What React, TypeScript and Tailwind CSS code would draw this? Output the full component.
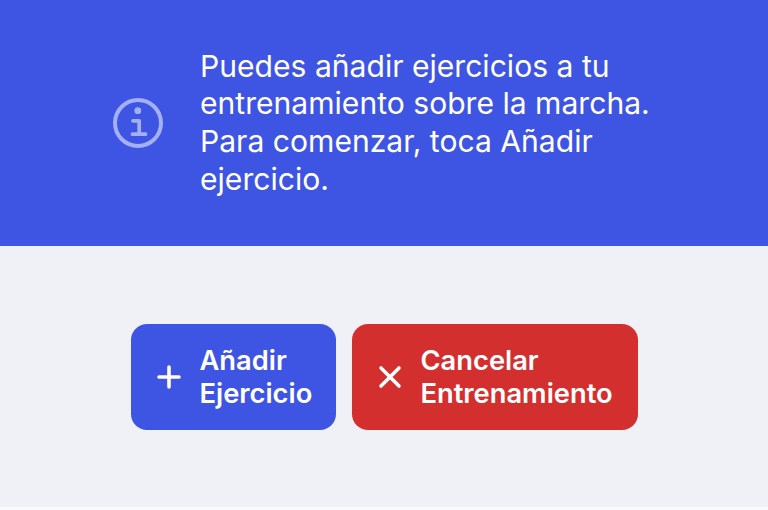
function InfoIcon() {
  return (
    <svg width="52" height="52" viewBox="0 0 52 52" fill="none" className="shrink-0">
      <circle cx="26" cy="26" r="23" stroke="#a3b0f5" strokeWidth="4" />
      <circle cx="25.8" cy="13.7" r="3.4" fill="#a3b0f5" />
      <path d="M21 23.8h6.2v13.4M20.5 37.2h13" stroke="#a3b0f5" strokeWidth="3.8" strokeLinecap="round" strokeLinejoin="round" />
    </svg>
  );
}

export default function App() {
  return (
    <div className="flex h-[510px] w-[768px] flex-col overflow-hidden bg-[#f0f1f6] font-['Inter',sans-serif]">
      <div className="flex h-[246px] items-center bg-[#3e54e3] pl-[112px] pr-[100px]">
        <InfoIcon />
        <p className="ml-[36px] text-[30.1px] leading-[37.6px] text-white">
          Puedes añadir ejercicios a tu entrenamiento sobre la marcha. Para comenzar, toca Añadir ejercicio.
        </p>
      </div>
      <div className="flex flex-1 gap-4 pt-[78px] pl-[131px]">
        <button type="button" className="flex h-[106px] w-[205px] items-center gap-[18.5px] rounded-2xl bg-[#3e54e3] pl-[26px] text-left text-[27.3px] leading-[33px] font-semibold text-white">
          <svg width="24" height="24" viewBox="0 0 24 24" fill="none" stroke="white" strokeWidth="3.6" strokeLinecap="round">
            <path d="M12 2v20M2 12h20" />
          </svg>
          <span>Añadir<br />Ejercicio</span>
        </button>
        <button type="button" className="flex h-[106px] w-[286px] items-center gap-[18.5px] rounded-2xl bg-[#d32f2e] pl-[26px] text-left text-[27.3px] leading-[33px] font-semibold text-white">
          <svg width="24" height="24" viewBox="0 0 24 24" fill="none" stroke="white" strokeWidth="3.6" strokeLinecap="round">
            <path d="M3 3l18 18M21 3L3 21" />
          </svg>
          <span>Cancelar<br />Entrenamiento</span>
        </button>
      </div>
      <div className="h-[3px] bg-[#fafafc]" />
    </div>
  );
}
